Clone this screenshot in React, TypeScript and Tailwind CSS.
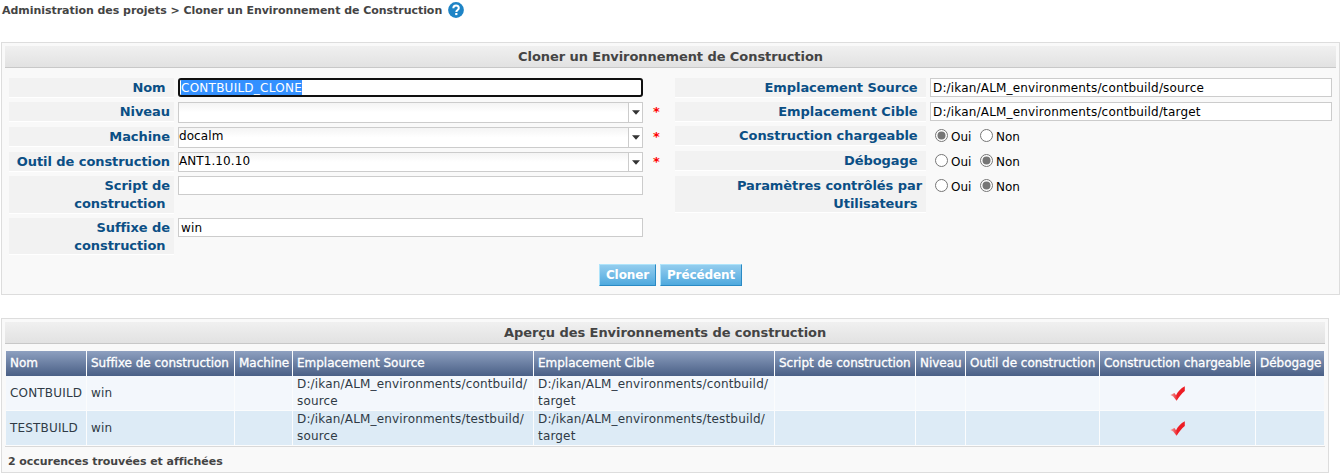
import type { ReactNode } from 'react';

const NB = '\u00a0';

function Panel({ title, className, children }: { title: string; className: string; children: ReactNode }) {
  return (
    <section className={`ml-px border border-[#dddddd] bg-[#f9f9f9] p-[3px] ${className}`}>
      <h2 className="flex h-[22px] items-center justify-center border-b border-[#c8c8c8] bg-linear-to-b from-[#f0f0f0] to-[#e2e2e2] text-[13px] font-bold tracking-[-0.07px] text-[#444444]">
        {title}
      </h2>
      {children}
    </section>
  );
}

function Label({ lines, className }: { lines: string[]; className: string }) {
  return (
    <div className={`shrink-0 border-b border-white bg-[#f2f2f2] pt-px pr-1 text-right text-[13px] leading-[18px] font-bold tracking-[-0.07px] whitespace-nowrap text-[#0b4f85] ${className}`}>
      {lines.map((l) => (
        <div key={l}>{l}</div>
      ))}
    </div>
  );
}

const textBox = 'border border-[#cccccc] bg-white px-[2px] pt-px text-[12px] leading-[17px] tracking-[0.17px] text-black';

function Combo({ value, className }: { value: string; className: string }) {
  return (
    <>
      <div className={`flex w-[465px] border border-[#cccccc] bg-linear-to-b from-[#f4f4f4] to-white to-50% text-[12px] tracking-[0.08px] text-black ${className}`}>
        <span className="flex-1 leading-[17px]">{value}</span>
        <span className="flex w-[14px] items-center justify-center border-l border-[#cccccc] bg-white">
          <svg width="8" height="5" viewBox="0 0 8 5">
            <path d="M0 0.3h8L4 4.7z" fill="#333" />
          </svg>
        </span>
      </div>
      <span className="ml-[10px] text-[13px] leading-[20px] font-bold text-[#ff0000]">*</span>
    </>
  );
}

function Radio({ on, text, className }: { on: boolean; text: string; className: string }) {
  return (
    <label className={`flex items-center ${className}`}>
      <svg width="13" height="13" viewBox="0 0 13 13" className="mr-[3px]">
        <circle cx="6.5" cy="6.5" r="6" fill="#fff" stroke="#767676" />
        {on && <circle cx="6.5" cy="6.5" r="4" fill="#767676" />}
      </svg>
      <span className="pt-[2px] text-[12px] leading-[18px] text-black">{text}</span>
    </label>
  );
}

function Choice({ yes }: { yes: boolean }) {
  return (
    <div className="ml-[9px] flex h-[19px]">
      <Radio on={yes} text="Oui" className="w-[45px]" />
      <Radio on={!yes} text="Non" className="" />
    </div>
  );
}

function Check() {
  return (
    <svg width="15" height="15" viewBox="0 0 15 15" className="mx-auto block">
      <defs>
        <linearGradient id="tick" x1="0" x2="0.5" y1="0" y2="0">
          <stop offset="0" stopColor="#f3b0ae" />
          <stop offset="1" stopColor="#ed1c24" />
        </linearGradient>
      </defs>
      <path d="M0.3 9 L4.4 6.9 6 9.2 C8 5.8 10.6 2.4 14.8 0.3 V5 C11.6 7.6 9 11 6.6 14.8 L3.2 10.6z" fill="url(#tick)" />
    </svg>
  );
}

const columns = [
  ['Nom', 'w-[81px]'],
  ['Suffixe de construction', 'w-[148px]'],
  ['Machine', 'w-[58px]'],
  ['Emplacement Source', 'w-[241px]'],
  ['Emplacement Cible', 'w-[241px]'],
  ['Script de construction', 'w-[141px]'],
  ['Niveau', 'w-[50px]'],
  ['Outil de construction', 'w-[134px]'],
  ['Construction chargeable', 'w-[156px]'],
  ['Débogage', 'w-[68px]'],
];

const rows = [
  { name: 'CONTBUILD', dir: 'contbuild', style: 'h-[35px] bg-[#f3f7fc]' },
  { name: 'TESTBUILD', dir: 'testbuild', style: 'h-[34px] bg-[#ddebf6]' },
];

const cell = 'border-r border-b border-[#fbfcfd] px-1 py-0 align-middle last:border-r-0';

export default function App() {
  return (
    <div className="h-[475px] w-[1342px] overflow-hidden bg-white font-['DejaVu_Sans',Verdana,sans-serif]">
      <header className="flex h-[42px] items-start pt-[2px] pl-[2px]">
        <h1 className="text-[11px] leading-[17px] font-bold tracking-[-0.04px] text-[#444444]">
          Administration des projets &gt; Cloner un Environnement de Construction
        </h1>
        <svg width="16" height="16" viewBox="0 0 16 16" className="ml-[6px]">
          <circle cx="8" cy="8" r="7.9" fill="#1e84c6" />
          <path d="M5.3 6.3C5.3 2.6 10.9 2.7 10.8 6 10.8 8 8.3 7.9 8.3 10" fill="none" stroke="#fff" strokeWidth="2" />
          <rect x="7.2" y="11" width="2.2" height="2.1" fill="#fff" />
        </svg>
      </header>

      <Panel title="Cloner un Environnement de Construction" className="h-[253px] w-[1339px]">
        <div className="flex h-[196px] pt-[10px] pl-1">
          <div className="flex w-[666px] flex-col">
            <div className="flex h-[24px] items-start">
              <Label lines={['Nom' + NB]} className="mr-1 h-[20px] w-[165px]" />
              <div className="flex h-[19px] w-[465px] items-start rounded-[3px] border-2 border-[#101010] bg-white pl-px text-[12px] leading-[17px] tracking-[0.25px] text-white">
                <span className="block h-[15px] bg-[#3390ff]">CONTBUILD_CLONE</span>
              </div>
            </div>
            <div className="flex h-[25px] items-start">
              <Label lines={['Niveau']} className="mr-1 h-[20px] w-[165px]" />
              <Combo value="" className="h-[21px]" />
            </div>
            <div className="flex h-[25px] items-start">
              <Label lines={['Machine']} className="mr-1 h-[20px] w-[165px]" />
              <Combo value="docalm" className="h-[21px]" />
            </div>
            <div className="flex h-[24px] items-start">
              <Label lines={['Outil de construction']} className="mr-1 h-[20px] w-[165px]" />
              <Combo value="ANT1.10.10" className="h-[20px]" />
            </div>
            <div className="flex h-[42px] items-start">
              <Label lines={['Script de', 'construction' + NB]} className="mr-1 h-[38px] w-[165px]" />
              <div className={`h-[19px] w-[465px] ${textBox}`} />
            </div>
            <div className="flex items-start">
              <Label lines={['Suffixe de', 'construction' + NB]} className="mr-1 h-[37px] w-[165px]" />
              <div className={`h-[19px] w-[465px] ${textBox}`}>win</div>
            </div>
          </div>

          <div className="flex flex-col">
            <div className="flex h-[24px] items-start">
              <Label lines={['Emplacement Source' + NB]} className="mr-1 h-[20px] w-[251px]" />
              <div className={`h-[19px] w-[402px] ${textBox}`}>D:/ikan/ALM_environments/contbuild/source</div>
            </div>
            <div className="flex h-[24px] items-start">
              <Label lines={['Emplacement Cible' + NB]} className="mr-1 h-[20px] w-[251px]" />
              <div className={`h-[19px] w-[402px] ${textBox}`}>D:/ikan/ALM_environments/contbuild/target</div>
            </div>
            <div className="flex h-[25px] items-start">
              <Label lines={['Construction chargeable' + NB]} className="h-[20px] w-[251px]" />
              <Choice yes />
            </div>
            <div className="flex h-[25px] items-start">
              <Label lines={['Débogage' + NB]} className="h-[20px] w-[251px]" />
              <Choice yes={false} />
            </div>
            <div className="flex items-start">
              <Label lines={['Paramètres contrôlés par', 'Utilisateurs' + NB]} className="h-[37px] w-[251px]" />
              <Choice yes={false} />
            </div>
          </div>
        </div>
        <div className="flex justify-center gap-1">
          {[
            ['Cloner', 'w-[57px]'],
            ['Précédent', 'w-[82px]'],
          ].map(([t, w]) => (
            <button key={t} className={`h-[22px] border border-t-[#aee4fb] border-r-[#2a8ac4] border-b-[#2a8ac4] border-l-[#aee4fb] bg-linear-to-b from-[#93cdee] to-[#4ea9de] text-[12px] leading-[20px] font-bold tracking-[-0.1px] text-white ${w}`}>
              {t}
            </button>
          ))}
        </div>
      </Panel>

      <Panel title="Aperçu des Environnements de construction" className="mt-[23px] h-[155px] w-[1328px]">
        <div className="mt-[7px] border-b border-[#d9d9d9] pl-px">
          <table className="w-[1318px] table-fixed border-separate border-spacing-0 text-[12px] leading-[17px] tracking-[0.17px] text-[#2f3a45]">
            <thead>
              <tr className="h-[25px] bg-linear-to-b from-[#8ea0c0] to-[#4a6086]">
                {columns.map(([t, w]) => (
                  <th key={t} className={`border-r border-[#fbfcfd] px-1 py-0 text-left font-normal tracking-[-0.02px] whitespace-nowrap text-white [-webkit-text-stroke:0.3px_white] last:border-r-0 ${w}`}>
                    {t}
                  </th>
                ))}
              </tr>
            </thead>
            <tbody>
              {rows.map((r) => (
                <tr key={r.name} className={r.style}>
                  <td className={cell}>{r.name}</td>
                  <td className={cell}>win</td>
                  <td className={cell} />
                  <td className={cell}>D:/ikan/ALM_environments/{r.dir}/<br />source</td>
                  <td className={cell}>D:/ikan/ALM_environments/{r.dir}/<br />target</td>
                  <td className={cell} />
                  <td className={cell} />
                  <td className={cell} />
                  <td className={cell}><Check /></td>
                  <td className={cell} />
                </tr>
              ))}
            </tbody>
          </table>
        </div>
        <p className="pt-[6px] pl-[3px] text-[11px] leading-[17px] font-bold tracking-[-0.06px] text-[#444444]">2 occurences trouvées et affichées</p>
      </Panel>
    </div>
  );
}
